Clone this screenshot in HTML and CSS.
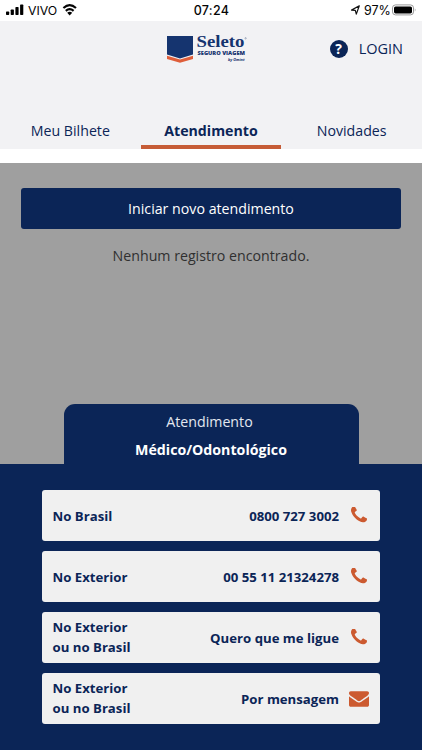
FILE: index.html
```html
<!DOCTYPE html>
<html lang="pt-BR">
<head>
<meta charset="utf-8">
<title>Seleto Seguro Viagem</title>
<link rel="stylesheet" href="styles.css">
</head>
<body>
<svg width="0" height="0" class="defs">
  <symbol id="phone" viewBox="192 192 1408 1408"><path d="M1600 1240q0 27-10 70.500t-21 68.500q-21 50-122 106-94 51-186 51-27 0-53-3.500t-57-12.500-47-14.500-55.500-20.500-49.500-18q-98-35-175-83-127-79-264-216t-216-264q-48-77-83-175-3-9-18-49.500t-20.500-55.500-14.500-47-12.500-57-3.500-53q0-92 51-186 56-101 106-122 25-11 68.500-21t70.500-10q14 0 21 3 18 6 53 76 11 19 30 54t35 63.500 31 53.500q3 4 17.500 25t21.500 35.500 7 28.500q0 20-28.500 50t-62 55-62 53-28.500 46q0 9 5 22.500t8.500 20.500 14 24 11.500 19q76 137 174 235t235 174q2 1 19 11.500t24 14 20.500 8.500 22.500 5q18 0 46-28.500t53-62 55-62 50-28.500q14 0 28.500 7t35.500 21.500 25 17.500q25 15 53.500 31t63.500 35 54 30q70 35 76 53 3 7 3 21z"/></symbol>
</svg>
<div class="status">
  <div class="carrier">
    <svg width="18" height="12" viewBox="0 0 18 12"><rect x="0" y="7.500" width="3.200" height="3.500" rx=".7"/><rect x="4.700" y="5.500" width="3.200" height="5.500" rx=".7"/><rect x="9.400" y="3" width="3.200" height="8" rx=".7"/><rect x="14.100" y=".5" width="3.200" height="10.500" rx=".7"/></svg>
    <span>VIVO</span>
    <svg width="16" height="12" viewBox="56 0 16 12"><path d="M57.400 4.100Q63.700-1.700 70 4.100M59.800 6.900Q63.700 3.400 67.600 6.900" fill="none" stroke="#050505" stroke-width="2.100"/><path d="M61.200 8.700Q63.700 6.700 66.200 8.700L63.700 11.400z"/></svg>
  </div>
  <span class="time">07:24</span>
  <div class="battery">
    <svg width="11" height="12" viewBox="0 0 11 12"><path d="M1.500 6.100 9.300 1.800 6.300 10.100 5.300 6.300z" fill="none" stroke="#111" stroke-width="1.200" stroke-linejoin="round"/></svg>
    <span>97%</span>
    <svg width="25" height="12" viewBox="42 0 25 12"><rect x="42.500" y=".9" width="21" height="10" rx="3" fill="none" stroke="#999"/><rect x="44" y="2.400" width="18" height="7" rx="1.600"/><path d="M64.800 4.200q1.700 1.700 0 3.400z" fill="#999"/></svg>
  </div>
</div>
<header class="header">
  <div class="brand">
    <svg width="84" height="30" viewBox="0 0 84 30"><path d="M0 1h26v18.500l-13 4-13-4z" fill="#15346f"/><path d="M0 20.800l13 3.600 13-3.600v3.200l-13 3.700-13-3.700z" fill="#df5e3a"/>
      <text class="name" x="29.500" y="12.300" textLength="48" lengthAdjust="spacingAndGlyphs">Seleto</text><circle cx="78.600" cy="3.300" r=".7" fill="none" stroke="#657695" stroke-width=".5"/>
      <text class="sub" x="30.500" y="20.200" textLength="47.500" lengthAdjust="spacingAndGlyphs">SEGURO VIAGEM</text>
      <text class="by" x="61" y="26.300" textLength="16.500" lengthAdjust="spacingAndGlyphs">by Omint</text></svg>
  </div>
  <div class="login"><span class="help">?</span><span class="login-text">LOGIN</span></div>
  <nav class="tabs"><a>Meu Bilhete</a><a class="active">Atendimento</a><a>Novidades</a></nav>
</header>
<main class="content">
  <div class="start">Iniciar novo atendimento</div>
  <p class="empty">Nenhum registro encontrado.</p>
</main>
<section class="sheet">
  <div class="sheet-tab"><span>Atendimento</span><b>Médico/Odontológico</b></div>
  <div class="sheet-body">
    <div class="card"><span>No Brasil</span><span class="value">0800 727 3002</span><svg class="phone"><use href="#phone"/></svg></div>
    <div class="card"><span>No Exterior</span><span class="value">00 55 11 21324278</span><svg class="phone"><use href="#phone"/></svg></div>
    <div class="card"><span class="two-line">No Exterior<br>ou no Brasil</span><span class="value">Quero que me ligue</span><svg class="phone"><use href="#phone"/></svg></div>
    <div class="card"><span class="two-line">No Exterior<br>ou no Brasil</span><span class="value">Por mensagem</span><svg class="mail" viewBox="0 256 1792 1408"><path d="M1792 710v794q0 66-47 113t-113 47h-1472q-66 0-113-47t-47-113v-794q44 49 101 87 362 246 497 345 57 42 92.500 65.500t94.500 48 110 24.500h2q51 0 110-24.500t94.500-48 92.500-65.500q170-123 498-345 57-39 100-87zm0-294q0 79-49 151t-122 123q-376 261-468 325-10 7-42.500 31t-54 38.500-52 32.500-57.500 27-50 9h-2q-23 0-50-9t-57.500-27-52-32.500-54-38.500-42.500-31q-91-64-262-182.500t-205-142.500q-62-42-117-115.500t-55-136.500q0-78 41.500-130t118.500-52h1472q65 0 112.500 47t47.500 113z"/></svg></div>
  </div>
</section>
</body>
</html>
```
FILE: styles.css
```css
* { box-sizing: border-box; }
body { margin: 0; height: 750px; overflow: hidden; display: flex; flex-direction: column; background: #9f9f9f; font: 14.2px/20px "Open Sans", "Noto Sans", sans-serif; color: #0b2557; }
.defs { position: absolute; }
.status { height: 21px; flex: none; background: #fff; display: grid; grid-template-columns: 1fr auto 1fr; align-items: start; padding: 4px 5px 0 6px; color: #050505; font: 12.5px/13px Inter, sans-serif; }
.carrier, .battery { display: flex; }
.carrier span { margin: 0 4px 0 4px; width: 30px; font-size: 12.3px; }
.battery { justify-self: end; }
.battery span { width: 26px; margin: 0 2px 0 3px; letter-spacing: -.1px; white-space: nowrap; }
.time { font-weight: 500; letter-spacing: .3px; }
.header { height: 128px; flex: none; background: #f2f2f4; display: grid; grid-template: 92px 36px / 1fr 80px 1fr; }
.brand { grid-column: 2; padding-top: 14px; }
.brand svg { display: block; margin-left: -4px; overflow: visible; }
.brand text { fill: #15346f; }
.brand .name { font: bold 16.5px "Liberation Serif", serif; }
.brand .sub { font: 800 5px "Open Sans", sans-serif; }
.brand .by { font: italic bold 4.2px "Open Sans", sans-serif; }
.login { display: flex; align-items: center; justify-content: flex-end; height: 20px; margin-top: 18px; padding-right: 19px; gap: 11px; }
.help { width: 18px; height: 18px; border-radius: 50%; background: #0b2557; color: #fff; font-size: 14px; line-height: 18px; font-weight: 700; text-align: center; }
.login-text { font-size: 14.5px; }
.tabs { grid-column: 1 / -1; display: grid; grid-template-columns: repeat(3, 1fr); text-align: center; }
.tabs a { height: 36px; line-height: 35px; }
.tabs .active { font-weight: 700; border-bottom: 4px solid #c65c36; }
.content { flex: 1; border-top: 14px solid #fff; padding: 25px 21px 0; }
.start { height: 41px; border-radius: 3px; background: #0b2557; color: #fff; text-align: center; line-height: 42px; }
.empty { margin: 17px 0 0; text-align: center; color: #303030; }
.sheet { flex: none; height: 346px; }
.sheet-tab { width: 295px; height: 60px; margin-left: 64px; padding-top: 4px; border-radius: 11px 11px 0 0; background: #0b2557; color: #fff; text-align: center; display: flex; flex-direction: column; line-height: 28px; }
.sheet-tab span { color: #e3e8f0; padding-right: 4px; }
.sheet-tab b { padding-right: 1px; }
.sheet-body { height: 286px; background: #0b2557; padding: 26px 42px 0; display: flex; flex-direction: column; gap: 10px; }
.card { height: 51px; width: 338px; flex: none; border-radius: 3px; background: #f0f0f0; padding: 0 11px 0 10.5px; display: flex; align-items: center; font-weight: 700; font-size: 13.2px; }
.two-line { padding-bottom: 2px; }
.value { margin-left: auto; }
.phone, .mail { fill: #cc5a30; flex: none; }
.phone { width: 16px; height: 16px; margin: 0 2px 1px 12px; }
.mail { width: 20px; height: 16px; margin-left: 10px; }
```
